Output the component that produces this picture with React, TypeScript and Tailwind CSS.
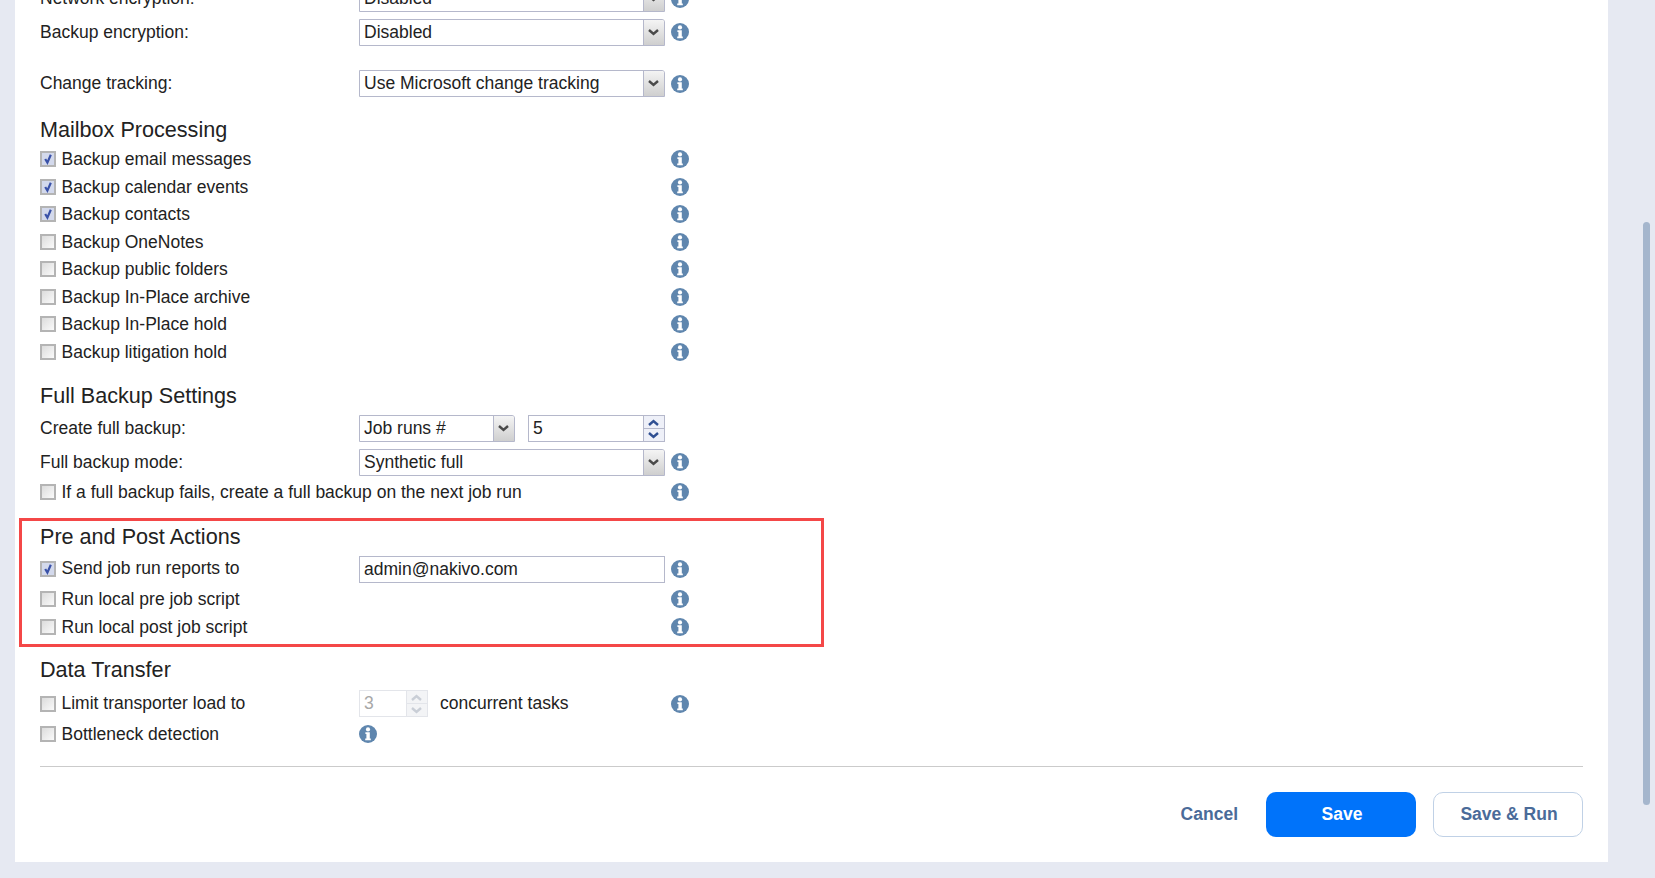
const FONT = "font-['Liberation_Sans',Arial,sans-serif]";

function InfoIcon() {
  return (
    <svg width="18" height="18" viewBox="0 0 18 18" className="shrink-0">
      <circle cx="9" cy="9" r="9" fill="#5f86ae" />
      <circle cx="9" cy="4.4" r="2.1" fill="#fff" />
      <path d="M6.4 7.2h4.4v6.2h1v1.9H6.2v-1.9h1.2V9.1h-1z" fill="#fff" />
    </svg>
  );
}

function Checkbox({ checked = false }: { checked?: boolean }) {
  return (
    <span className="relative block size-[16px] shrink-0 border-2 border-[#b4b4b4] bg-gradient-to-br from-[#dcdcdc] to-[#fafafa]">
      {checked && (
        <>
          <span className="block size-full bg-[#d3d9ec]" />
          <svg width="12" height="12" viewBox="0 0 12 12" className="absolute left-0 top-0">
            <path d="M3.2 6l2.2 3.6L8.8 1.8" fill="none" stroke="#3a52a8" strokeWidth="2.2" />
          </svg>
        </>
      )}
    </span>
  );
}

function Chevron() {
  return (
    <svg width="11" height="7" viewBox="0 0 11 7" className="-ml-[2px]">
      <path d="M1 1l4.5 4L10 1" fill="none" stroke="#4a4a4a" strokeWidth="2.4" />
    </svg>
  );
}

function Select({ value, width = "w-full" }: { value: string; width?: string }) {
  return (
    <div className={`flex h-[27px] ${width} items-stretch rounded-tr-[3px] border border-[#b5b8cb] bg-white`}>
      <span className="flex-1 truncate pl-[4px] text-[17.5px] leading-[25px] text-[#222]">{value}</span>
      <span className="flex w-[21px] items-center justify-center rounded-tr-[2px] border-l border-[#b5b8cb] bg-gradient-to-b from-[#f4f4f4] to-[#cfcfcf]">
        <Chevron />
      </span>
    </div>
  );
}

function Spinner({ disabled = false }: { disabled?: boolean }) {
  const stroke = disabled ? "#c9ced6" : "#2f4f92";
  const border = disabled ? "border-[#e3e5ea]" : "border-[#b5b8cb]";
  return (
    <span className={`flex w-[21px] flex-col border-l ${border} ${disabled ? "bg-[#f3f4f6]" : "bg-[#eef0f8]"}`}>
      <span className={`flex flex-1 items-center justify-center border-b ${border}`}>
        <svg width="11" height="7" viewBox="0 0 11 7" className="-ml-[2px]">
          <path d="M1 6l4.5-4L10 6" fill="none" stroke={stroke} strokeWidth="2.4" />
        </svg>
      </span>
      <span className="flex flex-1 items-center justify-center">
        <svg width="11" height="7" viewBox="0 0 11 7" className="-ml-[2px]">
          <path d="M1 1l4.5 4L10 1" fill="none" stroke={stroke} strokeWidth="2.4" />
        </svg>
      </span>
    </span>
  );
}

function Heading({ children, className = "" }: { children: string; className?: string }) {
  return <h3 className={`h-[28px] text-[21.6px] font-normal leading-[28px] text-[#222] ${className}`}>{children}</h3>;
}

function FieldRow({
  label,
  children,
  info = true,
  infoClass = "",
  className = "",
}: {
  label: string;
  children: React.ReactNode;
  info?: boolean;
  infoClass?: string;
  className?: string;
}) {
  return (
    <div className={`flex h-[27px] items-center ${className}`}>
      <span className="w-[319px] text-[17.5px] text-[#222]">{label}</span>
      <div className="flex w-[306px] items-center">{children}</div>
      {info && (
        <span className={`ml-[6px] ${infoClass}`}>
          <InfoIcon />
        </span>
      )}
    </div>
  );
}

function CheckRow({ label, checked, height = "h-[27.5px]" }: { label: string; checked?: boolean; height?: string }) {
  return (
    <div className={`flex ${height} items-center`}>
      <div className="flex w-[631px] items-center gap-[5.5px]">
        <Checkbox checked={checked} />
        <span className="text-[17.5px] text-[#222]">{label}</span>
      </div>
      <InfoIcon />
    </div>
  );
}

const MAILBOX = [
  { label: "Backup email messages", checked: true },
  { label: "Backup calendar events", checked: true },
  { label: "Backup contacts", checked: true },
  { label: "Backup OneNotes" },
  { label: "Backup public folders" },
  { label: "Backup In-Place archive" },
  { label: "Backup In-Place hold" },
  { label: "Backup litigation hold" },
];

export default function App() {
  return (
    <div className={`relative h-[878px] overflow-hidden bg-[#e6e9f2] ${FONT}`}>
      <div className="-mt-[15px] ml-[15px] h-[877px] w-[1593px] bg-white pl-[25px] pr-[25px]">
        <FieldRow label="Network encryption:">
          <Select value="Disabled" />
        </FieldRow>
        <FieldRow label="Backup encryption:" infoClass="mb-[2px]" className="mt-[7px]">
          <Select value="Disabled" />
        </FieldRow>
        <FieldRow label="Change tracking:" className="mt-[24px]">
          <Select value="Use Microsoft change tracking" />
        </FieldRow>

        <Heading className="mt-[19px]">Mailbox Processing</Heading>
        <div className="mt-[1.5px]">
          {MAILBOX.map((item) => (
            <CheckRow key={item.label} label={item.label} checked={item.checked} />
          ))}
        </div>

        <Heading className="mt-[16.5px]">Full Backup Settings</Heading>
        <FieldRow label="Create full backup:" info={false} className="mt-[5px]">
          <Select value="Job runs #" width="w-[156px]" />
          <div className="ml-[13px] flex h-[27px] w-[137px] border border-[#b5b8cb] bg-white">
            <span className="flex-1 pl-[4px] text-[17.5px] leading-[25px] text-[#222]">5</span>
            <Spinner />
          </div>
        </FieldRow>
        <FieldRow label="Full backup mode:" infoClass="mb-[2px]" className="mt-[7px]">
          <Select value="Synthetic full" />
        </FieldRow>
        <CheckRow label="If a full backup fails, create a full backup on the next job run" height="h-[30px] mt-[1px]" />

        <section className="-ml-[21px] mt-[11px] h-[129px] w-[805px] border-[3px] border-[#f44747] pl-[18px]">
          <Heading className="mt-[2px]">Pre and Post Actions</Heading>
          <div className="mt-[5px] flex h-[27px] items-center">
            <div className="flex w-[319px] items-center gap-[5.5px]">
              <span className="mb-[2px]">
                <Checkbox checked />
              </span>
              <span className="-mt-[2px] text-[17.5px] text-[#222]">Send job run reports to</span>
            </div>
            <div className="h-[27px] w-[306px] border border-[#b5b8cb] pl-[4px] text-[17.5px] leading-[25px] text-[#222]">admin@nakivo.com</div>
            <span className="mb-[2px] ml-[6px]">
              <InfoIcon />
            </span>
          </div>
          <CheckRow label="Run local pre job script" height="h-[28px] mt-[2px]" />
          <CheckRow label="Run local post job script" height="h-[28px]" />
        </section>

        <Heading className="mt-[9px]">Data Transfer</Heading>
        <div className="mt-[6px] flex h-[27px] items-center">
          <div className="flex w-[319px] items-center gap-[5.5px]">
            <Checkbox />
            <span className="text-[17.5px] text-[#222]">Limit transporter load to</span>
          </div>
          <div className="flex h-[27px] w-[306px] items-center">
            <div className="flex h-[27px] w-[69px] border border-[#e3e5ea]">
              <span className="flex-1 pl-[4px] text-[17.5px] leading-[25px] text-[#a8a8a8]">3</span>
              <Spinner disabled />
            </div>
            <span className="ml-[12px] text-[17.5px] text-[#222]">concurrent tasks</span>
          </div>
          <span className="ml-[6px]">
            <InfoIcon />
          </span>
        </div>
        <div className="mt-[3.5px] flex h-[27px] items-center">
          <div className="flex w-[319px] items-center gap-[5.5px]">
            <Checkbox />
            <span className="text-[17.5px] text-[#222]">Bottleneck detection</span>
          </div>
          <InfoIcon />
        </div>

        <div className="mt-[18.5px] h-px bg-[#cbcbcb]" />

        <div className="mt-[25px] flex items-center justify-end">
          <button className="mr-[28px] text-[17.5px] font-bold text-[#4a6b99]">Cancel</button>
          <button className="h-[45px] w-[150px] rounded-[10px] bg-[#0073fa] pl-[2px] text-[17.5px] font-bold text-white">Save</button>
          <button className="ml-[17px] h-[45px] w-[150px] rounded-[10px] border border-[#c0d1e6] bg-white pl-[2px] text-[17.5px] font-bold text-[#4a6b99]">Save &amp; Run</button>
        </div>
      </div>

      {/* scrollbar thumb floats over the page */}
      <div className="absolute left-[1643px] top-[222px] h-[583px] w-[7px] rounded-full bg-[#a5b6cd]" />
    </div>
  );
}
